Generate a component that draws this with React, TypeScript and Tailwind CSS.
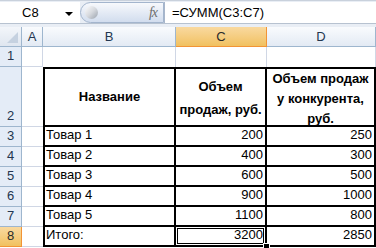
import type { ReactNode } from "react";

const rows = [
  { n: 3, name: "Товар 1", c: "200", d: "250" },
  { n: 4, name: "Товар 2", c: "400", d: "300" },
  { n: 5, name: "Товар 3", c: "600", d: "500" },
  { n: 6, name: "Товар 4", c: "900", d: "1000" },
  { n: 7, name: "Товар 5", c: "1100", d: "800" },
];

const colHead =
  "flex items-center justify-center border-r border-b border-[#9eb6ce] bg-gradient-to-b from-[#f9fbfd] to-[#e3eaf4] text-[#233650]";
const colHeadSel =
  "flex items-center justify-center border-r border-b border-[#f29436] bg-gradient-to-b from-[#f9d99f] to-[#f1c15f] text-[#2a2a2a]";
const rowHead =
  "flex items-end justify-center pb-[1px] border-r border-b border-[#9eb6ce] bg-[#e4ecf7] text-[#233650]";
const rowHeadSel =
  "flex items-end justify-center pb-[1px] border-r border-b border-[#f29436] bg-gradient-to-b from-[#f9d99f] to-[#f1c15f] text-[#2a2a2a]";
const grid = "border-r border-b border-[#d0d7e5]";
const cell = "border-r-2 border-b-2 border-black flex items-end pb-[1px]";

function RowHeader({ n, selected }: { n: number; selected?: boolean }) {
  return <div className={selected ? rowHeadSel : rowHead}>{n}</div>;
}

function Cell({ className, children }: { className?: string; children?: ReactNode }) {
  return <div className={`${cell} ${className ?? ""}`}>{children}</div>;
}

export default function App() {
  return (
    <div className="w-[376px] h-[248px] overflow-hidden bg-white text-[13px] text-black font-['Liberation_Sans',Arial,sans-serif]">
      {/* formula bar */}
      <div className="h-[27px] bg-[#e9eef5] border-t border-[#c9d1dc]">
        <div className="flex h-[22px] mt-[1px] border-b border-[#b7c2d0]">
          <div className="relative flex w-[80px] items-center bg-white pl-[22px]">
            C8
            <svg className="absolute left-[65px] top-[10px]" width="8" height="4" viewBox="0 0 8 4">
              <path d="M0 0h8L4 4z" fill="#000" />
            </svg>
          </div>
          <div className="flex w-[84px] items-center justify-between rounded-l-[11px] border border-[#a3b5cd] bg-gradient-to-b from-[#f7f9fc] to-[#d2ddee] pl-[4px] pr-[6px]">
            <span className="h-[13px] w-[13px] rounded-full bg-gradient-to-br from-[#fdfdfd] via-[#d6d9de] to-[#9aa2ad]" />
            <span className="font-['Liberation_Serif',serif] italic text-[14px] text-[#6e6e6e] tracking-[-1px]">
              fx
            </span>
          </div>
          <div className="flex flex-1 items-center border-l border-[#a8b6cb] bg-white pl-[7px]">
            =СУММ(C3:C7)
          </div>
        </div>
      </div>

      {/* sheet */}
      <div className="grid grid-cols-[22px_21px_133px_91px_109px] grid-rows-[20px_20px_60px_repeat(6,20px)]">
        {/* column headers */}
        <div className="relative border-r border-b border-[#9eb6ce] bg-gradient-to-b from-[#f3f6fa] to-[#dfe6f0]">
          <svg className="absolute right-[3px] bottom-[3px]" width="11" height="11" viewBox="0 0 11 11">
            <path d="M11 0V11H0z" fill="#c5d1e0" />
          </svg>
        </div>
        <div className={colHead}>A</div>
        <div className={colHead}>B</div>
        <div className={colHeadSel}>C</div>
        <div className={colHead}>D</div>

        {/* row 1 */}
        <RowHeader n={1} />
        <div className={grid} />
        <div className="border-r border-[#d0d7e5]" />
        <div className="border-r border-[#d0d7e5]" />
        <div className="border-r border-[#d0d7e5]" />

        {/* row 2 */}
        <RowHeader n={2} />
        <div className="border-b border-[#d0d7e5]" />
        <Cell className="border-l-2 border-t-2 !items-center justify-center font-bold">Название</Cell>
        <Cell className="border-t-2 !items-center justify-center text-center font-bold leading-[23px] pt-[2px]">
          Объем
          <br />
          продаж, руб.
        </Cell>
        <Cell className="border-t-2 !items-center justify-center text-center font-bold leading-[20px] pt-[4px]">
          Объем продаж
          <br />у конкурента,
          <br />
          руб.
        </Cell>

        {rows.map((r) => (
          <div key={r.n} className="contents">
            <RowHeader n={r.n} />
            <div className="border-b border-[#d0d7e5]" />
            <Cell className="border-l-2 pl-[1px]">{r.name}</Cell>
            <Cell className="justify-end pr-[2px]">{r.c}</Cell>
            <Cell className="justify-end pr-[2px]">{r.d}</Cell>
          </div>
        ))}

        {/* row 8 */}
        <RowHeader n={8} selected />
        <div className="border-b border-[#d0d7e5]" />
        <Cell className="border-l-2 pl-[1px]">Итого:</Cell>
        <Cell className="relative justify-end pr-[2px]">
          <div className="absolute inset-[1px] border border-black" />
          <span className="relative">3200</span>
          <div className="absolute -right-[5px] -bottom-[5px] h-[7px] w-[7px] border border-white bg-black" />
        </Cell>
        <Cell className="justify-end pr-[2px]">2850</Cell>
      </div>
    </div>
  );
}
